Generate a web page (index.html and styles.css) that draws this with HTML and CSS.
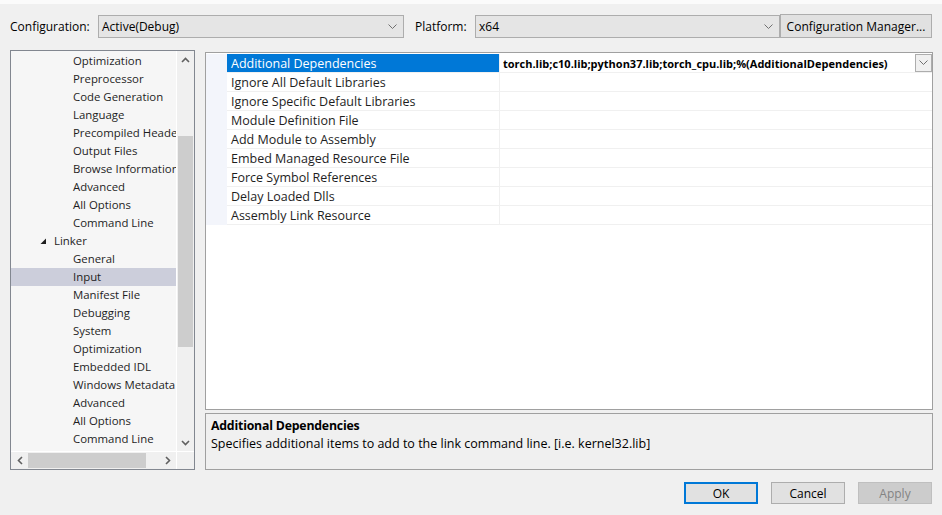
FILE: index.html
```html
<!DOCTYPE html>
<html>
<head>
<meta charset="utf-8">
<link rel="stylesheet" href="styles.css">
</head>
<body>
<div class="topstrip"></div>
<div class="config-row">
  <div class="lbl lbl-config">Configuration:</div>
  <div class="combo combo-config"><span>Active(Debug)</span><svg class="chev" width="9" height="6" viewBox="0 0 9 6"><polyline points="0.5,0.5 4.5,4.5 8.5,0.5" fill="none" stroke="#707070" stroke-width="1"/></svg></div>
  <div class="lbl lbl-platform">Platform:</div>
  <div class="combo combo-platform"><span>x64</span><svg class="chev" width="9" height="6" viewBox="0 0 9 6"><polyline points="0.5,0.5 4.5,4.5 8.5,0.5" fill="none" stroke="#707070" stroke-width="1"/></svg></div>
  <div class="btn btn-mgr">Configuration Manager...</div>
</div>

<div class="main">
  <div class="tree">
    <div class="tree-list">
      <div class="ti sub">Optimization</div>
      <div class="ti sub">Preprocessor</div>
      <div class="ti sub">Code Generation</div>
      <div class="ti sub">Language</div>
      <div class="ti sub">Precompiled Headers</div>
      <div class="ti sub">Output Files</div>
      <div class="ti sub">Browse Information</div>
      <div class="ti sub">Advanced</div>
      <div class="ti sub">All Options</div>
      <div class="ti sub">Command Line</div>
      <div class="ti top"><svg class="tri" width="7" height="7" viewBox="0 0 7 7"><polygon points="6,0.5 6,6 0.5,6" fill="#1e1e1e"/></svg>Linker</div>
      <div class="ti sub">General</div>
      <div class="ti sub sel">Input</div>
      <div class="ti sub">Manifest File</div>
      <div class="ti sub">Debugging</div>
      <div class="ti sub">System</div>
      <div class="ti sub">Optimization</div>
      <div class="ti sub">Embedded IDL</div>
      <div class="ti sub">Windows Metadata</div>
      <div class="ti sub">Advanced</div>
      <div class="ti sub">All Options</div>
      <div class="ti sub">Command Line</div>
    </div>
    <div class="vscroll">
      <div class="arrow"><svg width="9" height="6" viewBox="0 0 9 6"><polyline points="1,5 4.5,1.5 8,5" fill="none" stroke="#606060" stroke-width="1.6"/></svg></div>
      <div class="vtrack"><div class="vthumb"></div></div>
      <div class="arrow"><svg width="9" height="6" viewBox="0 0 9 6"><polyline points="1,1 4.5,4.5 8,1" fill="none" stroke="#606060" stroke-width="1.6"/></svg></div>
    </div>
    <div class="hscroll">
      <div class="harrow"><svg width="6" height="9" viewBox="0 0 6 9"><polyline points="5,1 1.5,4.5 5,8" fill="none" stroke="#606060" stroke-width="1.6"/></svg></div>
      <div class="htrack"><div class="hthumb"></div></div>
      <div class="harrow"><svg width="6" height="9" viewBox="0 0 6 9"><polyline points="1,1 4.5,4.5 1,8" fill="none" stroke="#606060" stroke-width="1.6"/></svg></div>
    </div>
    <div class="corner"></div>
  </div>

  <div class="right">
    <div class="grid">
      <div class="row">
        <div class="mcol"></div>
        <div class="name selected">Additional Dependencies</div>
        <div class="val"><span class="bold">torch.lib;c10.lib;python37.lib;torch_cpu.lib;%(AdditionalDependencies)</span><div class="ddbtn"><svg width="9" height="6" viewBox="0 0 9 6"><polyline points="0.5,0.5 4.5,4.5 8.5,0.5" fill="none" stroke="#707070" stroke-width="1"/></svg></div></div>
      </div>
      <div class="row"><div class="mcol"></div><div class="name">Ignore All Default Libraries</div><div class="val"></div></div>
      <div class="row"><div class="mcol"></div><div class="name">Ignore Specific Default Libraries</div><div class="val"></div></div>
      <div class="row"><div class="mcol"></div><div class="name">Module Definition File</div><div class="val"></div></div>
      <div class="row"><div class="mcol"></div><div class="name">Add Module to Assembly</div><div class="val"></div></div>
      <div class="row"><div class="mcol"></div><div class="name">Embed Managed Resource File</div><div class="val"></div></div>
      <div class="row"><div class="mcol"></div><div class="name">Force Symbol References</div><div class="val"></div></div>
      <div class="row"><div class="mcol"></div><div class="name">Delay Loaded Dlls</div><div class="val"></div></div>
      <div class="row"><div class="mcol"></div><div class="name">Assembly Link Resource</div><div class="val"></div></div>
    </div>
    <div class="desc">
      <div class="desc-title">Additional Dependencies</div>
      <div class="desc-text">Specifies additional items to add to the link command line. [i.e. kernel32.lib]</div>
    </div>
  </div>
</div>

<div class="buttons">
  <div class="btn dlg default">OK</div>
  <div class="btn dlg">Cancel</div>
  <div class="btn dlg disabled">Apply</div>
</div>
</body>
</html>
```

FILE: styles.css
```css
html, body {
  margin: 0;
  padding: 0;
}
body {
  width: 942px;
  height: 515px;
  background: #f0f0f0;
  font-family: "Open Sans", "Noto Sans", sans-serif;
  font-size: 12px;
  color: #000;
  overflow: hidden;
}
.topstrip {
  height: 4px;
  background: #fbfbfb;
}
.config-row {
  display: flex;
  align-items: center;
  height: 23px;
  margin-top: 11px;
  padding-left: 10px;
}
.lbl-config { width: 88px; }
.lbl-platform { width: 60px; margin-left: 11px; }
.combo {
  box-sizing: border-box;
  height: 23px;
  border: 1px solid #adadad;
  background: #e5e5e5;
  display: flex;
  align-items: center;
  justify-content: space-between;
  padding: 0 6px 0 3px;
}
.combo-config { width: 306px; }
.combo-platform { width: 305px; }
.chev { display: block; }
.btn {
  box-sizing: border-box;
  border: 1px solid #adadad;
  background: #e1e1e1;
  display: flex;
  align-items: center;
  justify-content: center;
}
.btn-mgr {
  width: 152px;
  height: 24px;
  margin-top: -1px;
}

.main {
  display: flex;
  align-items: flex-start;
  margin-top: 12px;
  padding-left: 10px;
}
.tree {
  box-sizing: border-box;
  width: 185px;
  height: 420px;
  border: 1px solid #828790;
  background: #f6f6f6;
  display: grid;
  grid-template-columns: 165px 18px;
  grid-template-rows: 400px 18px;
}
.tree-list {
  overflow: hidden;
  padding-top: 1px;
}
.ti {
  height: 18px;
  line-height: 18px;
  white-space: nowrap;
  color: #1e1e1e;
  font-size: 11.4px;
}
.ti.sub { padding-left: 62px; }
.ti.top { padding-left: 29px; display: flex; align-items: center; }
.tri { margin-right: 7px; }
.ti.sel { background: #cccedb; }

.vscroll {
  border-left: 1px solid #fff;
  background: #f0f0f0;
  display: flex;
  flex-direction: column;
}
.arrow {
  height: 17px;
  display: flex;
  align-items: center;
  justify-content: center;
}
.vtrack {
  flex: 1;
  display: flex;
  flex-direction: column;
  align-items: center;
}
.vthumb {
  width: 15px;
  height: 211px;
  margin-top: 68px;
  background: #cdcdcd;
}
.hscroll {
  border-top: 1px solid #fff;
  background: #f0f0f0;
  display: flex;
  align-items: center;
}
.harrow {
  width: 17px;
  height: 17px;
  display: flex;
  align-items: center;
  justify-content: center;
}
.htrack {
  flex: 1;
  display: flex;
  align-items: center;
}
.hthumb {
  width: 118px;
  height: 15px;
  background: #cdcdcd;
}
.corner {
  background: #f0f0f0;
  border-left: 1px solid #fff;
  border-top: 1px solid #fff;
}

.right {
  margin-left: 10px;
  padding-top: 2px;
  width: 728px;
}
.grid {
  box-sizing: border-box;
  height: 358px;
  border: 1px solid #a0a0a0;
  background: #fff;
  padding-top: 1px;
}
.row {
  display: flex;
  height: 19px;
}
.mcol {
  flex: 0 0 21px;
  background: #f3f5fb;
}
.name {
  box-sizing: border-box;
  flex: 0 0 272px;
  padding-left: 4px;
  padding-top: 1px;
  font-size: 12.5px;
  line-height: 18px;
  border-bottom: 1px solid #f0f0f0;
  white-space: nowrap;
  color: #1e1e1e;
}
.name.selected {
  background: #0078d7;
  color: #fff;
  border-bottom-color: #f0f0f0;
}
.val {
  box-sizing: border-box;
  flex: 1 1 auto;
  min-width: 0;
  border-left: 1px solid #f0f0f0;
  border-bottom: 1px solid #f0f0f0;
  padding-left: 3px;
  line-height: 18px;
  display: flex;
  justify-content: space-between;
  align-items: flex-start;
}
.bold {
  font-weight: 700;
  font-size: 11px;
  white-space: nowrap;
  overflow: hidden;
  padding-top: 1px;
}
.ddbtn {
  box-sizing: border-box;
  flex: 0 0 17px;
  height: 18px;
  border: 1px solid #adadad;
  background: #f0f0f0;
  display: flex;
  align-items: center;
  justify-content: center;
}

.desc {
  box-sizing: border-box;
  margin-top: 3px;
  height: 57px;
  border: 1px solid #a0a0a0;
  background: #f0f0f0;
  padding: 3px 5px 0;
}
.desc-title {
  font-weight: 700;
  line-height: 18px;
  font-size: 12.3px;
  letter-spacing: -0.2px;
}
.desc-text {
  line-height: 18px;
  font-size: 12.5px;
}

.buttons {
  display: flex;
  justify-content: flex-end;
  gap: 13px;
  margin-top: 12px;
  padding-right: 10px;
}
.dlg {
  width: 74px;
  height: 22px;
}
.dlg.default {
  border: 2px solid #0078d7;
}
.dlg.disabled {
  background: #cccccc;
  border-color: #bfbfbf;
  color: #838383;
}
```
